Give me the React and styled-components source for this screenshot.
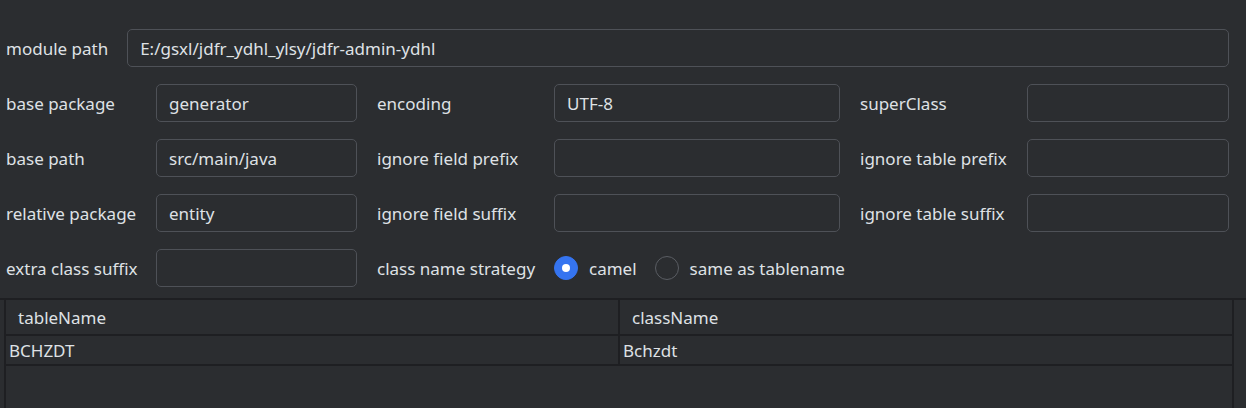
import React, { useState } from 'react';
import styled, { createGlobalStyle } from 'styled-components';

const GlobalStyle = createGlobalStyle`
	html, body {
		margin: 0;
		padding: 0;
		background: #2b2d30;
		overflow: hidden;
	}
	body {
		font-family: 'Noto Sans', 'Open Sans', sans-serif;
		color: #dfe1e5;
	}
`

const fields = [
	[
		{ label: 'base package', value: 'generator' },
		{ label: 'encoding', value: 'UTF-8' },
		{ label: 'superClass', value: '' },
	],
	[
		{ label: 'base path', value: 'src/main/java' },
		{ label: 'ignore field prefix', value: '' },
		{ label: 'ignore table prefix', value: '' },
	],
	[
		{ label: 'relative package', value: 'entity' },
		{ label: 'ignore field suffix', value: '' },
		{ label: 'ignore table suffix', value: '' },
	],
]

const rows = [
	{ tableName: 'BCHZDT', className: 'Bchzdt' },
]

const App = () => {

	const [strategy, setStrategy] = useState('camel');

	return (
		<Page>
			<GlobalStyle />
			<PathRow>
				<Label>module path</Label>
				<Field defaultValue='E:/gsxl/jdfr_ydhl_ylsy/jdfr-admin-ydhl' />
			</PathRow>
			<Grid>
				{fields.map((row, r) => row.map((f, i) => (
					<React.Fragment key={`${r}-${i}`}>
						<Label $indent={i > 0}>{f.label}</Label>
						<Field defaultValue={f.value} />
					</React.Fragment>
				)))}
				<Label>extra class suffix</Label>
				<Field defaultValue='' />
				<Label $indent>class name strategy</Label>
				<RadioGroup>
					<RadioItem onClick={() => setStrategy('camel')}>
						<Radio $checked={strategy === 'camel'} />
						camel
					</RadioItem>
					<RadioItem onClick={() => setStrategy('same')}>
						<Radio $checked={strategy === 'same'} />
						same as tablename
					</RadioItem>
				</RadioGroup>
			</Grid>
			<TableArea>
				<TableBox>
					<Table>
						<thead>
							<tr>
								<Th>tableName</Th>
								<Th>className</Th>
							</tr>
						</thead>
						<tbody>
							{rows.map(row => (
								<tr key={row.tableName}>
									<Td>{row.tableName}</Td>
									<Td>{row.className}</Td>
								</tr>
							))}
						</tbody>
					</Table>
				</TableBox>
			</TableArea>
		</Page>
	)
}

export default App;


const Page = styled.div`
	width: 1246px;
	height: 408px;
	padding-top: 29px;
	box-sizing: border-box;
	font-size: 17px;
	display: flex;
	flex-direction: column;
`

const PathRow = styled.div`
	display: flex;
	align-items: center;
	padding-left: 6px;
	width: 1223px;
	gap: 19px;

	input{
		flex: 1;
	}
`

const Grid = styled.div`
	display: grid;
	grid-template-columns: 150px 201px 197px 286px 187px 202px;
	grid-auto-rows: 38px;
	row-gap: 17px;
	margin-top: 17px;
	padding-left: 6px;
	align-items: center;
`

const Label = styled.div`
	padding-left: ${({ $indent }) => $indent ? '20px' : '0'};
	white-space: nowrap;
	color: #dfe1e5;
	line-height: 1;
`

const Field = styled.input`
	box-sizing: border-box;
	height: 38px;
	width: 100%;
	margin: 0;
	background: transparent;
	border: 1px solid #4e5157;
	border-radius: 5px;
	padding: 0 12px;
	color: #dfe1e5;
	font-family: inherit;
	font-size: 17px;
	outline: none;
`

const RadioGroup = styled.div`
	grid-column: span 3;
	display: flex;
	align-items: center;
	gap: 18px;
`

const RadioItem = styled.label`
	display: flex;
	align-items: center;
	gap: 11px;
	cursor: pointer;
	white-space: nowrap;
`

const Radio = styled.span`
	box-sizing: border-box;
	width: 24px;
	height: 24px;
	border-radius: 50%;
	display: inline-flex;
	align-items: center;
	justify-content: center;
	background: ${({ $checked }) => $checked ? '#3574f0' : 'transparent'};
	border: 1.5px solid ${({ $checked }) => $checked ? '#3574f0' : '#5a5d63'};

	&::after{
		content: '';
		width: 8px;
		height: 8px;
		border-radius: 50%;
		background: #ffffff;
		display: ${({ $checked }) => $checked ? 'block' : 'none'};
	}
`

const TableArea = styled.div`
	flex: 1;
	margin-top: 11px;
	border-top: 2px solid #1e1f22;
	display: flex;
`

const TableBox = styled.div`
	flex: 1;
	margin: 0 12px 0 4px;
	border-left: 2px solid #1e1f22;
	border-right: 2px solid #1e1f22;
`

const Table = styled.table`
	width: 100%;
	border-collapse: collapse;
	table-layout: fixed;
`

const Th = styled.th`
	text-align: left;
	font-weight: 400;
	height: 34px;
	padding: 0 0 0 12px;
	border-bottom: 2px solid #1e1f22;
	border-left: 2px solid #1e1f22;
	color: #dfe1e5;
	vertical-align: middle;

	&:first-child{
		border-left: none;
	}
`

const Td = styled.td`
	height: 28px;
	padding: 0 0 0 3px;
	border-bottom: 2px solid #1e1f22;
	border-left: 2px solid #1e1f22;
	color: #dfe1e5;

	&:first-child{
		border-left: none;
	}
`
